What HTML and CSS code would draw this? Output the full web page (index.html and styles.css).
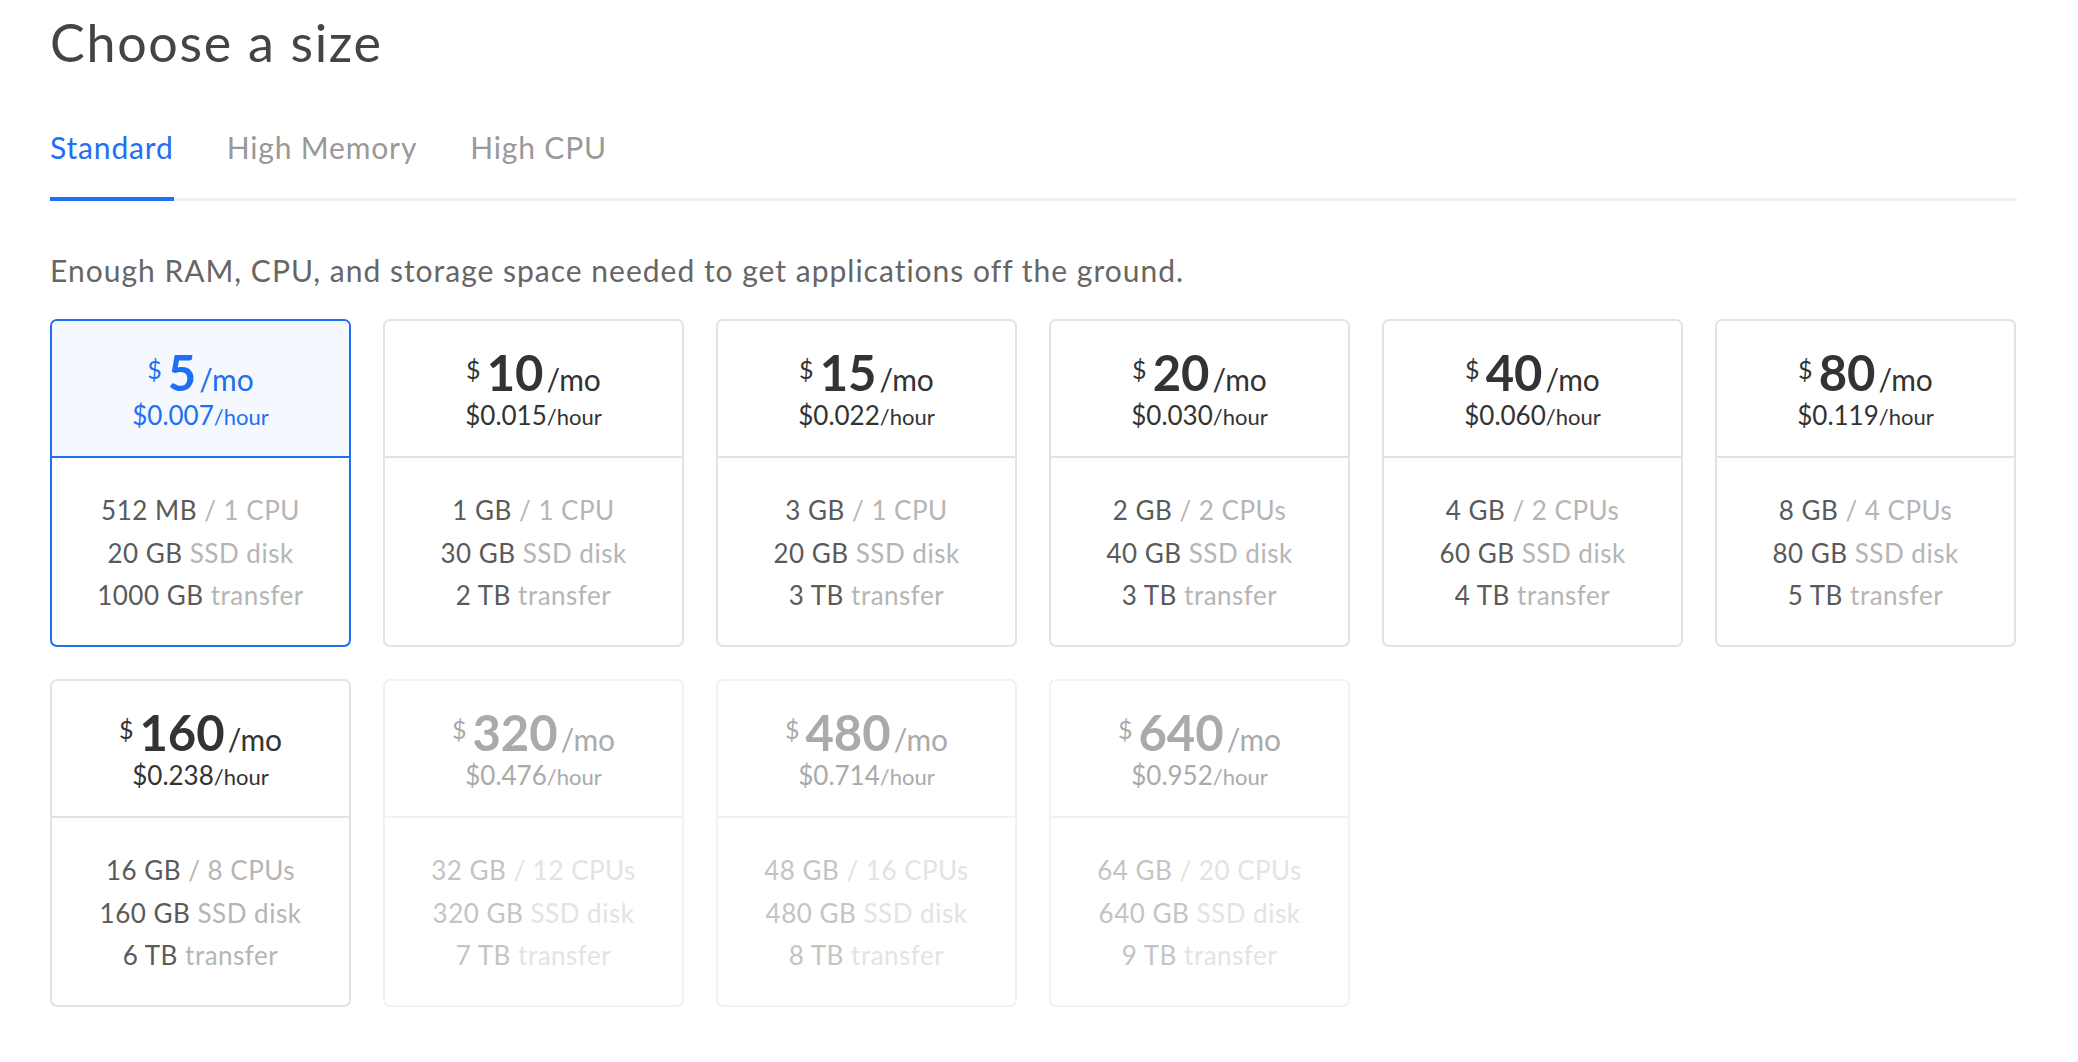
FILE: index.html
```html
<!DOCTYPE html>
<html lang="en">
<head>
<meta charset="utf-8">
<title>Choose a size</title>
<link rel="stylesheet" href="styles.css">
</head>
<body>
<main class="page">
  <h1 class="title">Choose a size</h1>
  <nav class="tabs">
    <a class="tab active">Standard</a>
    <a class="tab">High Memory</a>
    <a class="tab">High CPU</a>
  </nav>
  <p class="desc">Enough RAM, CPU, and storage space needed to get applications off the ground.</p>
  <div class="grid">
    <div class="card selected">
      <div class="card-head">
        <div class="price"><span class="cur">$</span><span class="amt">5</span><span class="per">/mo</span></div>
        <div class="hour"><span class="hval">$0.007</span><span class="hper">/hour</span></div>
      </div>
      <div class="card-body">
        <div class="spec">512 MB <span class="dim">/ 1 CPU</span></div>
        <div class="spec">20 GB <span class="dim">SSD disk</span></div>
        <div class="spec">1000 GB <span class="dim">transfer</span></div>
      </div>
    </div>
    <div class="card">
      <div class="card-head">
        <div class="price"><span class="cur">$</span><span class="amt">10</span><span class="per">/mo</span></div>
        <div class="hour"><span class="hval">$0.015</span><span class="hper">/hour</span></div>
      </div>
      <div class="card-body">
        <div class="spec">1 GB <span class="dim">/ 1 CPU</span></div>
        <div class="spec">30 GB <span class="dim">SSD disk</span></div>
        <div class="spec">2 TB <span class="dim">transfer</span></div>
      </div>
    </div>
    <div class="card">
      <div class="card-head">
        <div class="price"><span class="cur">$</span><span class="amt">15</span><span class="per">/mo</span></div>
        <div class="hour"><span class="hval">$0.022</span><span class="hper">/hour</span></div>
      </div>
      <div class="card-body">
        <div class="spec">3 GB <span class="dim">/ 1 CPU</span></div>
        <div class="spec">20 GB <span class="dim">SSD disk</span></div>
        <div class="spec">3 TB <span class="dim">transfer</span></div>
      </div>
    </div>
    <div class="card">
      <div class="card-head">
        <div class="price"><span class="cur">$</span><span class="amt">20</span><span class="per">/mo</span></div>
        <div class="hour"><span class="hval">$0.030</span><span class="hper">/hour</span></div>
      </div>
      <div class="card-body">
        <div class="spec">2 GB <span class="dim">/ 2 CPUs</span></div>
        <div class="spec">40 GB <span class="dim">SSD disk</span></div>
        <div class="spec">3 TB <span class="dim">transfer</span></div>
      </div>
    </div>
    <div class="card">
      <div class="card-head">
        <div class="price"><span class="cur">$</span><span class="amt">40</span><span class="per">/mo</span></div>
        <div class="hour"><span class="hval">$0.060</span><span class="hper">/hour</span></div>
      </div>
      <div class="card-body">
        <div class="spec">4 GB <span class="dim">/ 2 CPUs</span></div>
        <div class="spec">60 GB <span class="dim">SSD disk</span></div>
        <div class="spec">4 TB <span class="dim">transfer</span></div>
      </div>
    </div>
    <div class="card">
      <div class="card-head">
        <div class="price"><span class="cur">$</span><span class="amt">80</span><span class="per">/mo</span></div>
        <div class="hour"><span class="hval">$0.119</span><span class="hper">/hour</span></div>
      </div>
      <div class="card-body">
        <div class="spec">8 GB <span class="dim">/ 4 CPUs</span></div>
        <div class="spec">80 GB <span class="dim">SSD disk</span></div>
        <div class="spec">5 TB <span class="dim">transfer</span></div>
      </div>
    </div>
    <div class="card">
      <div class="card-head">
        <div class="price"><span class="cur">$</span><span class="amt">160</span><span class="per">/mo</span></div>
        <div class="hour"><span class="hval">$0.238</span><span class="hper">/hour</span></div>
      </div>
      <div class="card-body">
        <div class="spec">16 GB <span class="dim">/ 8 CPUs</span></div>
        <div class="spec">160 GB <span class="dim">SSD disk</span></div>
        <div class="spec">6 TB <span class="dim">transfer</span></div>
      </div>
    </div>
    <div class="card disabled">
      <div class="card-head">
        <div class="price"><span class="cur">$</span><span class="amt">320</span><span class="per">/mo</span></div>
        <div class="hour"><span class="hval">$0.476</span><span class="hper">/hour</span></div>
      </div>
      <div class="card-body">
        <div class="spec">32 GB <span class="dim">/ 12 CPUs</span></div>
        <div class="spec">320 GB <span class="dim">SSD disk</span></div>
        <div class="spec">7 TB <span class="dim">transfer</span></div>
      </div>
    </div>
    <div class="card disabled">
      <div class="card-head">
        <div class="price"><span class="cur">$</span><span class="amt">480</span><span class="per">/mo</span></div>
        <div class="hour"><span class="hval">$0.714</span><span class="hper">/hour</span></div>
      </div>
      <div class="card-body">
        <div class="spec">48 GB <span class="dim">/ 16 CPUs</span></div>
        <div class="spec">480 GB <span class="dim">SSD disk</span></div>
        <div class="spec">8 TB <span class="dim">transfer</span></div>
      </div>
    </div>
    <div class="card disabled">
      <div class="card-head">
        <div class="price"><span class="cur">$</span><span class="amt">640</span><span class="per">/mo</span></div>
        <div class="hour"><span class="hval">$0.952</span><span class="hper">/hour</span></div>
      </div>
      <div class="card-body">
        <div class="spec">64 GB <span class="dim">/ 20 CPUs</span></div>
        <div class="spec">640 GB <span class="dim">SSD disk</span></div>
        <div class="spec">9 TB <span class="dim">transfer</span></div>
      </div>
    </div>
  </div>
</main>
</body>
</html>
```
FILE: styles.css
```css
html, body {
  margin: 0;
  padding: 0;
  background: #ffffff;
}

body {
  font-family: "Lato", "Open Sans", sans-serif;
  color: #444444;
}

.page {
  width: 1967px;
  padding: 12px 0 0 50px;
}

.title {
  margin: 0;
  font-size: 52px;
  line-height: 60px;
  font-weight: 400;
  color: #444444;
  letter-spacing: 1.7px;
}

.tabs {
  display: flex;
  gap: 53px;
  margin-top: 57px;
  border-bottom: 3px solid #f0f0f0;
}

.tab {
  font-size: 30px;
  line-height: 36px;
  padding-bottom: 32px;
  margin-bottom: -3px;
  border-bottom: 4px solid transparent;
  color: #999999;
  letter-spacing: 0.85px;
}

.tab.active {
  color: #1d6ff3;
  border-bottom-color: #1d6ff3;
}

.desc {
  margin: 51px 0 0;
  font-size: 30px;
  line-height: 36px;
  color: #666666;
  letter-spacing: 1px;
}

.grid {
  display: grid;
  grid-template-columns: repeat(6, 301px);
  gap: 32px 32px;
  margin-top: 31px;
}

.card {
  box-sizing: border-box;
  height: 328px;
  border: 2px solid #e3e3e3;
  border-radius: 7px;
  display: flex;
  flex-direction: column;
  text-align: center;
  overflow: hidden;
}

.card-head {
  height: 137px;
  box-sizing: border-box;
  padding-top: 24px;
  border-bottom: 2px solid #e3e3e3;
  color: #333333;
}

.price {
  font-size: 30px;
  line-height: 48px;
  height: 48px;
  white-space: nowrap;
}

.cur {
  font-size: 25px;
  vertical-align: 12px;
  margin-right: 6px;
}

.amt {
  font-size: 49px;
  font-weight: 700;
  margin-right: 3px;
}

.per {
  font-size: 30px;
}

.hour {
  margin-top: 5px;
  line-height: 34px;
  white-space: nowrap;
}

.hval {
  font-size: 26px;
}

.hper {
  font-size: 22px;
}

.card-body {
  flex: 1;
  padding-top: 31px;
}

.spec {
  font-size: 26px;
  line-height: 42.5px;
  color: #5a5a5a;
  white-space: nowrap;
  letter-spacing: 0.5px;
}

.dim {
  color: #b5b5b5;
}

.card.selected {
  border-color: #1d6ff3;
}

.card.selected .card-head {
  background: #f5f9ff;
  border-bottom-color: #1d6ff3;
  color: #1d6ff3;
}

.card.disabled {
  border-color: #f2f2f2;
}

.card.disabled .card-head {
  border-bottom-color: #f2f2f2;
  color: #aaaaaa;
}

.card.disabled .spec {
  color: #c4c4c4;
}

.card.disabled .dim {
  color: #e3e3e3;
}
```
